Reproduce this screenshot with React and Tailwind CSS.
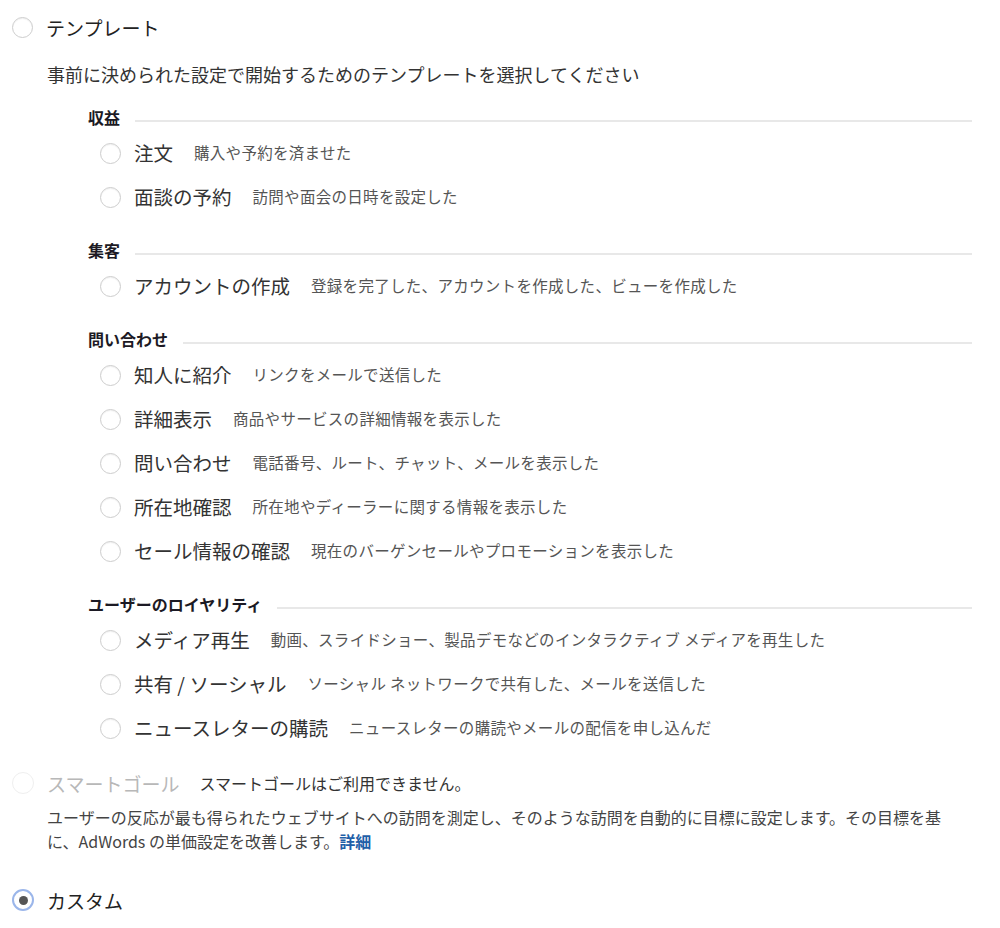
import React from "react";

const FONT = { fontFamily: '"Noto Sans CJK JP", "Noto Sans", sans-serif' };

const SECTIONS = [
  {
    title: "収益",
    items: [
      ["注文", "購入や予約を済ませた"],
      ["面談の予約", "訪問や面会の日時を設定した"],
    ],
  },
  {
    title: "集客",
    items: [["アカウントの作成", "登録を完了した、アカウントを作成した、ビューを作成した"]],
  },
  {
    title: "問い合わせ",
    items: [
      ["知人に紹介", "リンクをメールで送信した"],
      ["詳細表示", "商品やサービスの詳細情報を表示した"],
      ["問い合わせ", "電話番号、ルート、チャット、メールを表示した"],
      ["所在地確認", "所在地やディーラーに関する情報を表示した"],
      ["セール情報の確認", "現在のバーゲンセールやプロモーションを表示した"],
    ],
  },
  {
    title: "ユーザーのロイヤリティ",
    items: [
      ["メディア再生", "動画、スライドショー、製品デモなどのインタラクティブ メディアを再生した"],
      ["共有 / ソーシャル", "ソーシャル ネットワークで共有した、メールを送信した"],
      ["ニュースレターの購読", "ニュースレターの購読やメールの配信を申し込んだ"],
    ],
  },
];

// plain radio circle; "checked" draws the blue ring + dark dot
function Radio({ checked = false, disabled = false }) {
  if (checked) {
    return (
      <span className="w-[22px] h-[22px] shrink-0 rounded-full border-[2px] border-[#9bb6ea] bg-white flex items-center justify-center">
        <span className="w-[9px] h-[9px] rounded-full bg-[#555]" />
      </span>
    );
  }
  return (
    <span
      className={
        disabled
          ? "w-[22px] h-[22px] shrink-0 rounded-full border-[1.5px] border-[#efefef] bg-white"
          : "w-[21px] h-[21px] shrink-0 rounded-full border-[1.5px] border-[#cdcdcd] bg-white shadow-[inset_0_1px_1px_rgba(0,0,0,0.06)]"
      }
    />
  );
}

function Section({ title, items }) {
  return (
    <div className="mb-[19px]">
      <div className="h-[26px] flex items-center gap-[15px]">
        <span className="text-[16px] font-bold text-[#1c1a24] leading-none">{title}</span>
        <div className="flex-1 h-[2px] bg-[#e8e8e8] mt-[8px]" />
      </div>
      {items.map(([label, desc]) => (
        <div key={label} className="h-[44px] flex items-center pl-[12px] pt-[2px]">
          <Radio />
          <span className="ml-[13px] text-[19.5px] text-[#333] leading-none">{label}</span>
          <span className="ml-[21px] text-[15.5px] tracking-[0.3px] text-[#555] leading-none">
            {desc}
          </span>
        </div>
      ))}
    </div>
  );
}

export default function App() {
  return (
    <div className="min-h-screen bg-white pt-[12px] pl-[12px]" style={FONT}>
      {/* ── Template option ─── */}
      <div className="h-[30px] flex items-center">
        <Radio />
        <span className="ml-[13px] text-[19px] text-[#222] leading-none">テンプレート</span>
      </div>
      <p className="mt-[19px] ml-[35px] h-[26px] leading-[26px] text-[18px] text-[#333]">
        事前に決められた設定で開始するためのテンプレートを選択してください
      </p>

      <div className="mt-[17px] ml-[76px] w-[884px]">
        {SECTIONS.map((s) => (
          <Section key={s.title} {...s} />
        ))}
      </div>

      {/* ── Smart goal (disabled) ─── */}
      <div className="mt-[4px] h-[30px] flex items-center">
        <Radio disabled />
        <span className="ml-[13px] text-[19px] text-[#b8b8b8] leading-none">スマートゴール</span>
        <span className="ml-[20px] text-[16px] text-[#333] leading-none">
          スマートゴールはご利用できません。
        </span>
      </div>
      <div className="mt-[7px] ml-[35px] w-[905px] text-[16px] leading-[24px] text-[#444]">
        <p>ユーザーの反応が最も得られたウェブサイトへの訪問を測定し、そのような訪問を自動的に目標に設定します。その目標を基</p>
        <p>
          に、AdWords の単価設定を改善します。<a className="text-[#1f5fa8] font-bold">詳細</a>
        </p>
      </div>

      {/* ── Custom (selected) ─── */}
      <div className="mt-[32px] h-[30px] flex items-center">
        <Radio checked />
        <span className="ml-[13px] text-[19px] text-[#222] leading-none">カスタム</span>
      </div>
    </div>
  );
}
